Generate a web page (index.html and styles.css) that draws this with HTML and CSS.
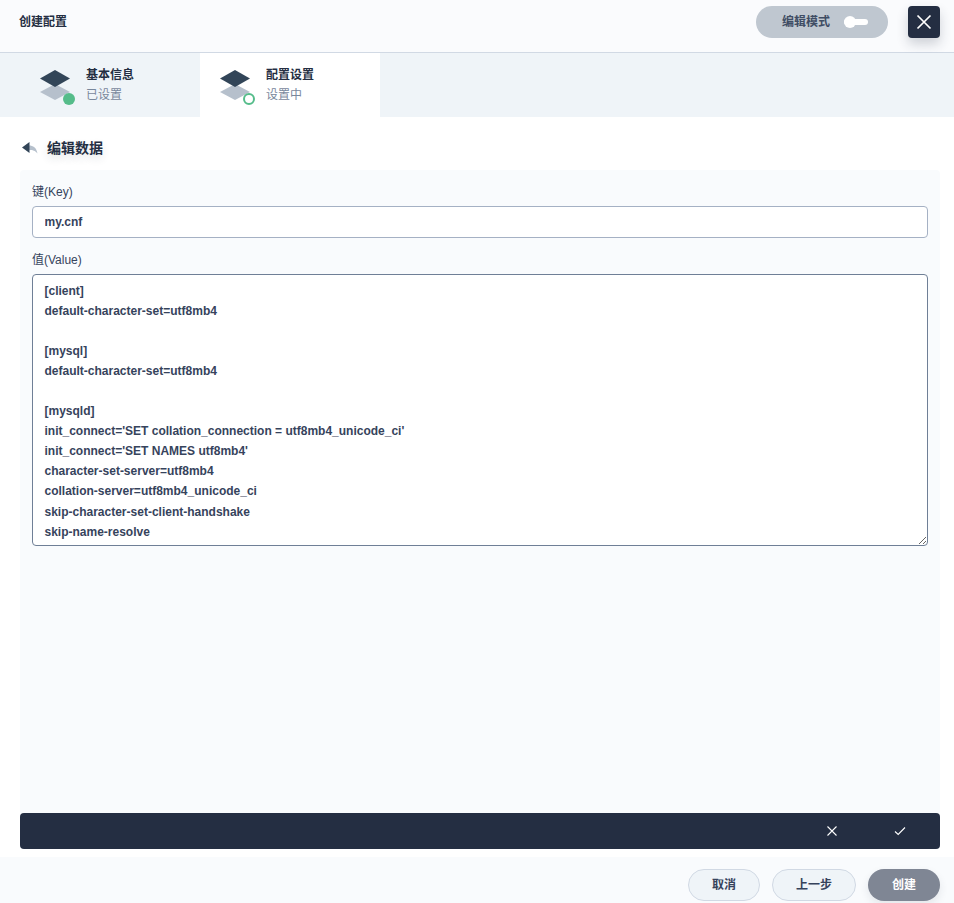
FILE: index.html
```html
<!DOCTYPE html>
<html lang="zh">
<head>
<meta charset="utf-8">
<title>创建配置</title>
<link rel="stylesheet" href="styles.css">
</head>
<body>
<div class="modal">
  <header class="head">
    <h1 class="head-title">创建配置</h1>
    <div class="mode-pill">
      <span>编辑模式</span>
      <span class="toggle"><i class="toggle-knob"></i></span>
    </div>
    <button class="close-btn" type="button" aria-label="关闭">
      <svg width="16" height="16" viewBox="0 0 16 16"><path d="M1.5 1.5 14.5 14.5M14.5 1.5 1.5 14.5" stroke="#fff" stroke-width="1.7" fill="none"/></svg>
    </button>
  </header>
  <nav class="tabs">
    <div class="tab tab-first">
      <span class="tab-icon">
        <svg width="30" height="30" viewBox="0 0 30 30"><path d="M15 14 30 22 15 30 0 22Z" fill="#b6c0cc"/><path d="M15 0 30 8.500 15 17 0 8.500Z" fill="#324558"/></svg>
        <i class="dot dot-done"></i>
      </span>
      <span class="tab-text"><b>基本信息</b><small>已设置</small></span>
    </div>
    <div class="tab tab-active">
      <span class="tab-icon">
        <svg width="30" height="30" viewBox="0 0 30 30"><path d="M15 14 30 22 15 30 0 22Z" fill="#b6c0cc"/><path d="M15 0 30 8.500 15 17 0 8.500Z" fill="#324558"/></svg>
        <i class="dot dot-active"></i>
      </span>
      <span class="tab-text"><b>配置设置</b><small>设置中</small></span>
    </div>
  </nav>
  <main class="body">
    <div class="back">
      <svg width="16" height="12" viewBox="0 0 16 12"><path d="M7 3.500C11 3.500 14.500 5.500 15.500 11.500 13 8.500 11 8 7 8Z" fill="#b6c0cc"/><path d="M7.500 0V11L0 5.500Z" fill="#324558"/></svg>
      <span>编辑数据</span>
    </div>
    <section class="panel">
      <div class="form">
        <label class="label" for="key">键(Key)</label>
        <input id="key" class="field" type="text" value="my.cnf">
        <label class="label label-value" for="value">值(Value)</label>
        <textarea id="value" class="field area" spellcheck="false">[client]
default-character-set=utf8mb4

[mysql]
default-character-set=utf8mb4

[mysqld]
init_connect='SET collation_connection = utf8mb4_unicode_ci'
init_connect='SET NAMES utf8mb4'
character-set-server=utf8mb4
collation-server=utf8mb4_unicode_ci
skip-character-set-client-handshake
skip-name-resolve</textarea>
      </div>
      <div class="bar">
        <svg class="bar-x" width="10" height="10" viewBox="0 0 10 10"><path d="M.5.500 9.500 9.500M9.500.500.500 9.500" stroke="#fff" stroke-width="1.100" fill="none"/></svg>
        <svg class="bar-check" width="12" height="10" viewBox="0 0 12 10"><path d="M1 5.500 4.200 8.500 11 1.500" stroke="#fff" stroke-width="1.100" fill="none"/></svg>
      </div>
    </section>
  </main>
  <footer class="foot">
    <button class="btn btn-cancel" type="button">取消</button>
    <button class="btn btn-prev" type="button">上一步</button>
    <button class="btn btn-create" type="button">创建</button>
  </footer>
</div>
</body>
</html>
```
FILE: styles.css
```css
* { box-sizing: border-box; }
html, body { margin: 0; height: 100%; }
body {
  background: #fff;
  color: #242e42;
  font-family: "Liberation Sans", "Noto Sans CJK SC", sans-serif;
  font-size: 12px;
  line-height: 20px;
}
.modal { width: 954px; height: 903px; display: flex; flex-direction: column; overflow: hidden; }
.head {
  height: 53px;
  flex: none;
  display: flex;
  align-items: flex-start;
  padding: 6px 14px 0 19px;
  background: #fafbfd;
  border-bottom: 1px solid #d1d9e4;
}
.head-title { margin: 6px auto 0 0; font-size: 12px; line-height: 20px; font-weight: 700; }
.mode-pill {
  width: 132px;
  height: 32px;
  display: flex;
  align-items: center;
  padding-left: 26px;
  gap: 14px;
  border-radius: 16px;
  background: #bfc7d0;
  color: #3f4d64;
  font-weight: 700;
}
.toggle { position: relative; display: block; width: 24px; height: 6px; border-radius: 3px; background: #fff; }
.toggle-knob { position: absolute; left: 0; top: -3px; width: 12px; height: 12px; border-radius: 50%; background: #fff; }
.close-btn {
  width: 32px;
  height: 32px;
  margin-left: 20px;
  padding: 0;
  border: 0;
  border-radius: 4px;
  background: #242e42;
  display: flex;
  align-items: center;
  justify-content: center;
  box-shadow: 0 6px 12px rgba(36, 46, 66, .2);
}
.tabs { height: 64px; flex: none; display: flex; background: #eff4f8; }
.tab { width: 180px; height: 64px; display: flex; gap: 16px; padding: 17px 0 0 20px; }
.tab-first { width: 200px; padding-left: 40px; }
.tab-active { background: #fff; }
.tab-icon { position: relative; display: block; width: 30px; height: 30px; }
.tab-icon svg { display: block; }
.dot { position: absolute; left: 23px; top: 23px; width: 12px; height: 12px; border-radius: 50%; }
.dot-done { background: #55bc8a; }
.dot-active { background: #fff; border: 2px solid #55bc8a; }
.tab-text { display: flex; flex-direction: column; margin-top: -5px; }
.tab-text b { font-weight: 700; line-height: 20px; }
.tab-text small { font-size: 12px; line-height: 20px; color: #79879c; }
.body { flex: 1; display: flex; flex-direction: column; padding: 0 14px 0 20px; min-height: 0; }
.back {
  height: 53px;
  flex: none;
  display: flex;
  align-items: center;
  gap: 9px;
  padding: 8px 0 0 2px;
  font-size: 14px;
  font-weight: 700;
  text-shadow: 0 4px 8px rgba(36, 46, 66, .12);
}
.back svg { display: block; }
.panel { flex: 1; display: flex; flex-direction: column; background: #f9fbfd; border-radius: 4px; min-height: 0; }
.form { flex: 1; padding: 12px 12px 0 12px; }
.label { display: block; color: #36435c; line-height: 20px; }
.label-value { margin-top: 12px; }
.field {
  display: block;
  width: 100%;
  margin-top: 4px;
  padding: 0 11.500px;
  border: 1px solid #a5b1c4;
  border-radius: 4px;
  background: #fff;
  color: #36435c;
  font: 700 12px/20px "Liberation Sans", "Noto Sans CJK SC", sans-serif;
  outline: 0;
}
input.field { height: 32px; }
.area { height: 272px; padding: 6px 11.500px 5px; line-height: 20.050px; border-color: #6f7f96; overflow: hidden; white-space: pre; }
.bar {
  height: 36px;
  flex: none;
  display: flex;
  align-items: center;
  justify-content: flex-end;
  padding-right: 34px;
  gap: 57px;
  background: #242e42;
  border-radius: 4px;
}
.bar svg { display: block; }
.foot {
  height: 46px;
  flex: none;
  margin-top: 8px;
  display: flex;
  align-items: flex-start;
  justify-content: flex-end;
  gap: 12px;
  padding: 12px 14px 0 0;
  background: #f9fbfd;
}
.btn {
  height: 32px;
  padding: 0;
  border-radius: 16px;
  border: 1px solid #d1d9e4;
  background: #eff4f8;
  color: #36435c;
  font: 700 12px/20px "Liberation Sans", "Noto Sans CJK SC", sans-serif;
}
.btn-cancel { width: 72px; }
.btn-prev { width: 84px; }
.btn-create { width: 72px; border: 0; background: #7f8694; color: #fff; box-shadow: 0 4px 8px rgba(36, 46, 66, .1); }
```
